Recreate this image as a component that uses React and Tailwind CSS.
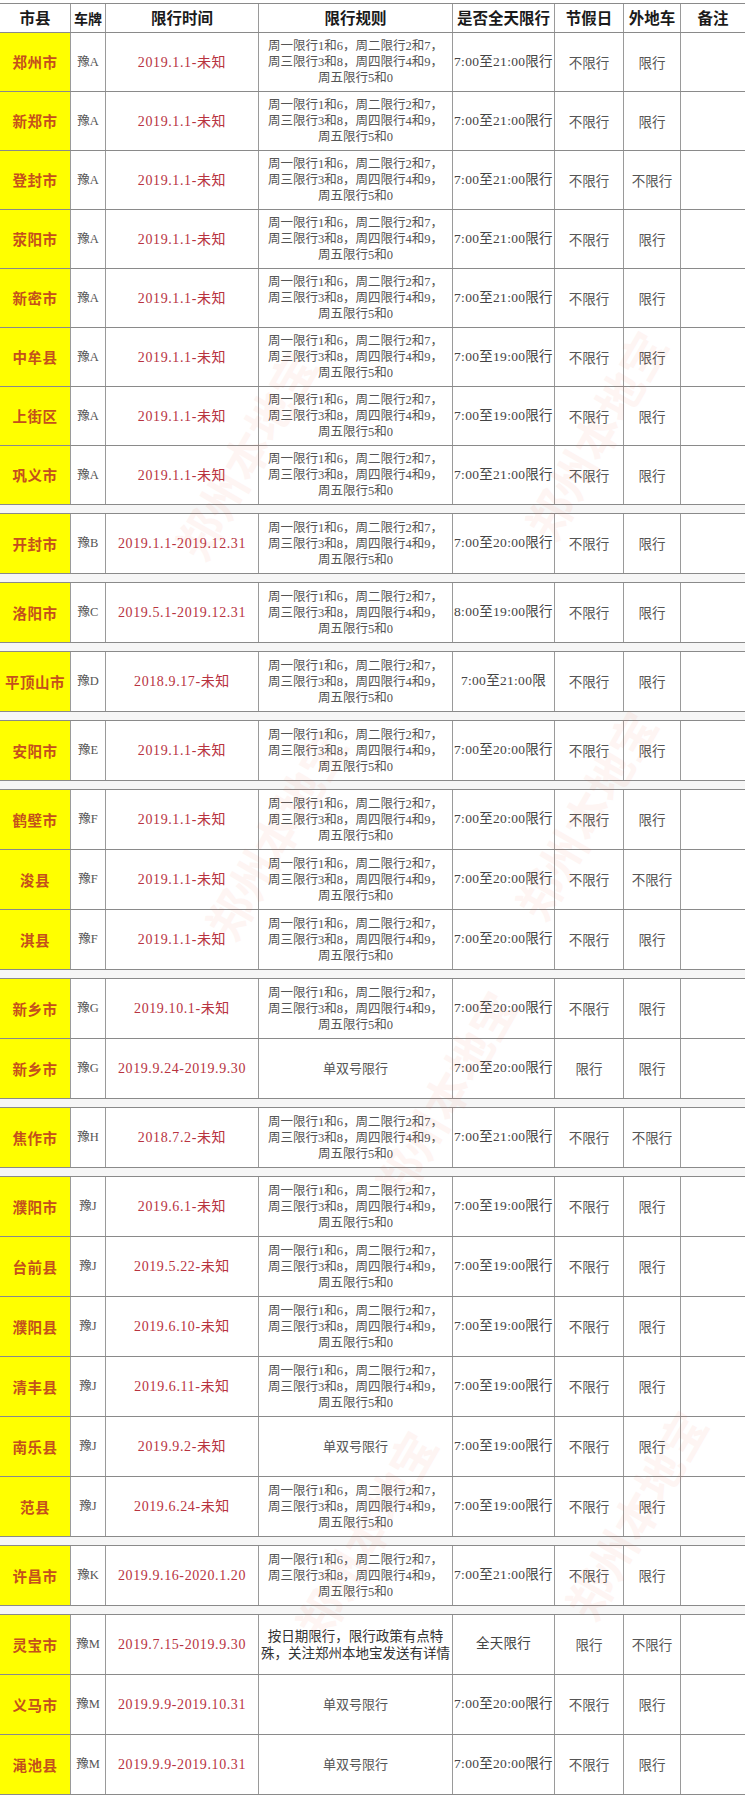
import React from 'react';

const COLS = 'grid grid-cols-[71px_35px_153px_194px_102px_69px_57px_64px]';
const CJK = "'Noto Sans CJK SC', sans-serif";
const MIX = "'Liberation Serif', 'Noto Sans CJK SC', serif";

// [city, plate, date, rule, time, holiday, outside]
const groups = [
  [
    ['郑州市', '豫A', '2019.1.1-未知', 'std', '7:00至21:00限行', '不限行', '限行'],
    ['新郑市', '豫A', '2019.1.1-未知', 'std', '7:00至21:00限行', '不限行', '限行'],
    ['登封市', '豫A', '2019.1.1-未知', 'std', '7:00至21:00限行', '不限行', '不限行'],
    ['荥阳市', '豫A', '2019.1.1-未知', 'std', '7:00至21:00限行', '不限行', '限行'],
    ['新密市', '豫A', '2019.1.1-未知', 'std', '7:00至21:00限行', '不限行', '限行'],
    ['中牟县', '豫A', '2019.1.1-未知', 'std', '7:00至19:00限行', '不限行', '限行'],
    ['上街区', '豫A', '2019.1.1-未知', 'std', '7:00至19:00限行', '不限行', '限行'],
    ['巩义市', '豫A', '2019.1.1-未知', 'std', '7:00至21:00限行', '不限行', '限行'],
  ],
  [['开封市', '豫B', '2019.1.1-2019.12.31', 'std', '7:00至20:00限行', '不限行', '限行']],
  [['洛阳市', '豫C', '2019.5.1-2019.12.31', 'std', '8:00至19:00限行', '不限行', '限行']],
  [['平顶山市', '豫D', '2018.9.17-未知', 'std', '7:00至21:00限', '不限行', '限行']],
  [['安阳市', '豫E', '2019.1.1-未知', 'std', '7:00至20:00限行', '不限行', '限行']],
  [
    ['鹤壁市', '豫F', '2019.1.1-未知', 'std', '7:00至20:00限行', '不限行', '限行'],
    ['浚县', '豫F', '2019.1.1-未知', 'std', '7:00至20:00限行', '不限行', '不限行'],
    ['淇县', '豫F', '2019.1.1-未知', 'std', '7:00至20:00限行', '不限行', '限行'],
  ],
  [
    ['新乡市', '豫G', '2019.10.1-未知', 'std', '7:00至20:00限行', '不限行', '限行'],
    ['新乡市', '豫G', '2019.9.24-2019.9.30', 'dsh', '7:00至20:00限行', '限行', '限行'],
  ],
  [['焦作市', '豫H', '2018.7.2-未知', 'std', '7:00至21:00限行', '不限行', '不限行']],
  [
    ['濮阳市', '豫J', '2019.6.1-未知', 'std', '7:00至19:00限行', '不限行', '限行'],
    ['台前县', '豫J', '2019.5.22-未知', 'std', '7:00至19:00限行', '不限行', '限行'],
    ['濮阳县', '豫J', '2019.6.10-未知', 'std', '7:00至19:00限行', '不限行', '限行'],
    ['清丰县', '豫J', '2019.6.11-未知', 'std', '7:00至19:00限行', '不限行', '限行'],
    ['南乐县', '豫J', '2019.9.2-未知', 'dsh', '7:00至19:00限行', '不限行', '限行'],
    ['范县', '豫J', '2019.6.24-未知', 'std', '7:00至19:00限行', '不限行', '限行'],
  ],
  [['许昌市', '豫K', '2019.9.16-2020.1.20', 'std', '7:00至21:00限行', '不限行', '限行']],
  [
    ['灵宝市', '豫M', '2019.7.15-2019.9.30', 'lb', '全天限行', '限行', '不限行'],
    ['义马市', '豫M', '2019.9.9-2019.10.31', 'dsh', '7:00至20:00限行', '不限行', '限行'],
    ['渑池县', '豫M', '2019.9.9-2019.10.31', 'dsh', '7:00至20:00限行', '不限行', '限行'],
  ],
];

const Rule = ({ kind }) => {
  if (kind === 'dsh') return <span className="text-[13px]">单双号限行</span>;
  if (kind === 'lb')
    return (
      <span className="text-[13.5px] leading-[17px] text-[#333]">
        按日期限行，限行政策有点特
        <br />
        殊，关注郑州本地宝发送有详情
      </span>
    );
  return (
    <span className="text-[12.5px] leading-[16px]">
      周一限行1和6，周二限行2和7，
      <br />
      周三限行3和8，周四限行4和9，
      <br />
      周五限行5和0
    </span>
  );
};

const cell = 'flex items-center justify-center text-center border-r border-[#9a9a9a] overflow-hidden whitespace-nowrap';

const Row = ({ r, h }) => (
  <div className={`${COLS} ${h} border-b border-[#8a8a8a]`}>
    <div className={`${cell} bg-[#ffff00] text-[#c4501c] font-bold text-[14.5px] tracking-[0.5px]`} style={{ fontFamily: CJK }}>
      {r[0]}
    </div>
    <div className={`${cell} text-[#555] text-[12.5px]`} style={{ fontFamily: MIX }}>{r[1]}</div>
    <div className={`${cell} text-[#b8333f] text-[14px] tracking-[0.6px]`} style={{ fontFamily: MIX }}>{r[2]}</div>
    <div className={`${cell} text-[#555]`} style={{ fontFamily: MIX }}>
      <Rule kind={r[3]} />
    </div>
    <div className={`${cell} text-[#444] text-[13.5px] tracking-[0.3px]`} style={{ fontFamily: MIX }}>{r[4]}</div>
    <div className={`${cell} text-[#555] text-[13.5px]`} style={{ fontFamily: CJK }}>{r[5]}</div>
    <div className={`${cell} text-[#555] text-[13.5px]`} style={{ fontFamily: CJK }}>{r[6]}</div>
    <div className="" />
  </div>
);

// faint diagonal watermark, as in the source image
const marks = [
  [130, 420], [480, 400], [160, 800], [470, 780], [330, 1060], [250, 1500], [520, 1480],
];

const App = () => {
  return (
    <div className="relative w-[745px] bg-white pt-[3px] overflow-hidden">
      {/* Header */}
      <div className={`${COLS} h-[30px] border-t border-b border-[#8a8a8a]`} style={{ fontFamily: CJK }}>
        {['市县', '车牌', '限行时间', '限行规则', '是否全天限行', '节假日', '外地车'].map((t) => (
          <div key={t} className={`${cell} text-[#1a1a1a] font-semibold ${t === '车牌' ? 'text-[14px]' : 'text-[15.5px]'}`}>
            {t}
          </div>
        ))}
        <div className="flex items-center justify-center text-[#1a1a1a] font-semibold text-[15.5px]">备注</div>
      </div>

      {groups.map((g, gi) => (
        <div key={gi}>
          {gi > 0 && <div className="h-[9px] bg-[#f6f6f6] border-b border-[#8a8a8a]" />}
          {g.map((r, ri) => (
            <Row key={ri} r={r} h={gi === 0 ? 'h-[59px]' : 'h-[60px]'} />
          ))}
        </div>
      ))}

      {marks.map(([x, y], i) => (
        <div
          key={i}
          className="absolute pointer-events-none select-none text-[46px] font-bold text-[#f06040] opacity-[0.06] -rotate-[60deg] whitespace-nowrap"
          style={{ left: x, top: y, fontFamily: CJK }}
        >
          郑州本地宝
        </div>
      ))}
    </div>
  );
};

export default App;
